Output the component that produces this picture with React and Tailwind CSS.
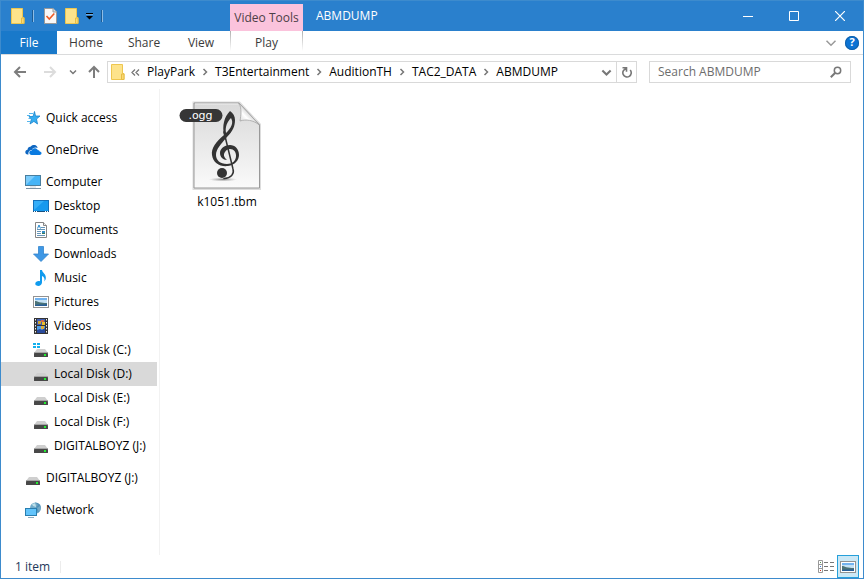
const Folder = ({ className = "" }) => (
  <svg width="14" height="16" viewBox="0 0 14 16" className={"shrink-0 " + className}>
    <path d="M.5.5h11v9h1.500v6H.5z" fill="#fde38b" stroke="#eec64f" />
    <path d="M10.500 10h2.500v5.500h-2.500z" fill="#fbd974" stroke="#e6bd45" />
  </svg>
);

const CheckDoc = () => (
  <svg width="13" height="16" viewBox="0 0 13 16">
    <path d="M.5.5h8.500l3.500 3.500v11.500h-12z" fill="#f8f8f8" stroke="#9a9a9a" />
    <path d="M9 .5v3.500h3.500" fill="#ddd" stroke="#9a9a9a" />
    <path d="M2.500 8l2.800 3 5-5.500" fill="none" stroke="#ee5a24" strokeWidth="1.600" />
  </svg>
);

const Separator = () => (
  <svg width="4" height="14" viewBox="0 0 4 14">
    <path d="M.5 1v12" stroke="#1b5c96" />
    <path d="M1.500 1v12" stroke="#8dbce5" />
  </svg>
);

const Chevron = ({ dir = "down", size = 8, color = "#777", weight = 2 }) => (
  <svg width={size} height={size} viewBox="0 0 8 8" fill="none" stroke={color} strokeWidth={weight}>
    <path d={dir === "down" ? "M1 2.500l3 3 3-3" : "M2.500 1l3 3-3 3"} />
  </svg>
);

const Arrow = ({ className = "", color = "#7d7d7d" }) => (
  <svg width="14" height="14" viewBox="0 0 14 14" className={className} fill="none" stroke={color} strokeWidth="2">
    <path d="M13 7H2M7 2L2 7l5 5" />
  </svg>
);

const Star = () => (
  <svg width="16" height="16" viewBox="0 0 16 16">
    <path d="M9.500 1.500l1 4.500h4.500l-3.500 3 1 5L8.900 11.400 5 14l1.300-4.500L4 6.500h4z" fill="#36adf0" stroke="#1b84cc" strokeWidth=".8" />
    <path d="M4 3.500h4M2 5.500h3M3.500 8.500h2M2 11.500h3" stroke="#55b7ee" />
  </svg>
);

const Cloud = () => (
  <svg width="17" height="16" viewBox="0 0 17 16">
    <path d="M3.500 12.500H2.800C1 12.500.3 11.300.3 10.100c0-1.300 1-2.300 2.200-2.400C2.700 5.700 4 4.600 5.500 4.800 6.500 3.300 8 2.700 9.600 3c1.600.3 2.700 1.400 3 2.900-1.500-.9-4.600-.7-5.800 2-2.200.1-3.900 1.900-3.300 4.600z" fill="#0f67c1" />
    <path d="M6.700 13c-1.500 0-2.400-1-2.400-2.200 0-1.300 1-2.200 2.400-2.200.5-1.600 1.900-2.500 3.400-2.300 1.300.1 2.300.9 2.800 2 1.100 0 1.600.5 1.800 1.300 1.100.1 1.800.8 1.800 1.700 0 1-.8 1.700-1.900 1.700z" fill="#0b7be0" />
  </svg>
);

const Monitor = () => (
  <svg width="17" height="16" viewBox="0 0 17 16">
    <rect x=".5" y="1.500" width="15" height="10" fill="#45b4f7" stroke="#497e9e" />
    <path d="M1 11L10 2H1z" fill="#7cccfb" />
    <path d="M5 13h6" stroke="#c9d3da" />
    <path d="M1 14.500h15" stroke="#7b92a4" />
  </svg>
);

const Desktop = () => (
  <svg width="16" height="16" viewBox="0 0 16 16">
    <rect x=".5" y="2.500" width="15" height="11" fill="#1799ee" stroke="#1470ba" />
    <path d="M1 12L11 3H1z" fill="#35aef8" />
    <path d="M0 13.500h16" stroke="#164f7e" />
    <path d="M1 13.500h1M3 13.500h1M12 13.500h1M14 13.500h1" stroke="#fff" />
  </svg>
);

const Documents = () => (
  <svg width="16" height="16" viewBox="0 0 16 16">
    <path d="M2.500.5h8l3 3v12h-11z" fill="#fff" stroke="#858585" />
    <path d="M10.500.5v3h3" fill="#eee" stroke="#858585" />
    <path d="M4.500 6.500L6 3l1.500 3.500" stroke="#2387ca" fill="none" />
    <path d="M8 5.500h4M4 7.500h8M4 9.500h4M4 11.500h4M4 13.500h8" stroke="#6695b8" />
    <path d="M9 9h3v3H9z" fill="#348cc5" />
    <path d="M9 11h3v1H9z" fill="#397a57" />
  </svg>
);

const Downloads = () => (
  <svg width="16" height="16" viewBox="0 0 16 16">
    <path d="M5.500.5h5v7.500h5L8 15.500.5 8h5z" fill="#3f98e5" stroke="#3284cd" strokeWidth=".8" />
  </svg>
);

const Music = () => (
  <svg width="16" height="16" viewBox="0 0 16 16">
    <path d="M7 0h2c.3 3 4.500 4 3.800 8.500-.2 1.300-.8 2-1.500 3 .8-3-.3-4.500-2.300-5.500v6.500C8.800 15 7 16 5 15.900c-1.800 0-2.900-1-2.700-2.300.2-1.800 2.400-3 4.700-2.300z" fill="#109bee" />
  </svg>
);

const Picture = () => (
  <svg width="16" height="16" viewBox="0 0 16 16">
    <rect x=".5" y="2.500" width="15" height="11" fill="#fff" stroke="#929292" />
    <path d="M2 4h12v8H2z" fill="#72b3f0" />
    <path d="M2 6h12v3H2z" fill="#c5e1f4" />
    <path d="M2 7c2-.5 3 1 6 1.500S12 9 14 9v3H2z" fill="#4c7377" />
    <path d="M2 11c4-1 8 0 12-1v2H2z" fill="#285f98" />
  </svg>
);

const Video = () => (
  <svg width="16" height="16" viewBox="0 0 16 16">
    <path d="M1 0h14v16H1z" fill="#343434" />
    <path d="M4 1h8v6H4z" fill="#425eb0" />
    <path d="M4 8h8v7H4z" fill="#4e9ee9" />
    <path d="M5 3h3v3H5z" fill="#cda334" />
    <path d="M8 2h3v2H8z" fill="#d46a47" />
    <path d="M9 4h3v3H9z" fill="#eabf2e" />
    <path d="M4 12l3-1 2 1 3-2v5H4z" fill="#294a9b" />
    <path d="M8 8h3v3H8z" fill="#dfad3c" />
    <path d="M2.500 1v14M13.500 1v14" stroke="#eee" strokeDasharray="1.500 1.500" />
  </svg>
);

const Disk = ({ win }) => (
  <svg width="16" height="16" viewBox="0 0 16 16">
    <path d="M4 7h8l3 4H1z" fill="#cfcfcf" />
    <rect x="1" y="11" width="14" height="4" rx=".5" fill="#484848" />
    <path d="M1 10.500h14" stroke="#a5a5a5" />
    <path d="M11 12h2v2h-2z" fill="#21ef31" />
    {win && <path d="M0 1h3v2H0zM4 1h3v2H4zM0 4h3v2H0zM4 4h3v2H4z" fill="#13b0ed" />}
  </svg>
);

const Network = () => (
  <svg width="17" height="17" viewBox="0 0 17 17">
    <circle cx="10.500" cy="6" r="5.500" fill="#72acca" />
    <path d="M7 2l4-1 2 2-2 2-3-1zM12 6l3-2 1 3-2 3z" fill="#bddfe9" />
    <path d="M10 .5a5.500 5.500 0 015.800 6.500 6 6 0 01-3 4z" fill="#347aa7" opacity=".55" />
    <rect x=".5" y="6.500" width="11" height="7" fill="#62c4fb" stroke="#297eaf" />
    <path d="M3 15.500h6" stroke="#8eacc0" />
  </svg>
);

const OggFile = () => (
  <svg width="96" height="96" viewBox="0 0 96 96" role="img" aria-label="ogg audio file">
    <defs>
      <linearGradient id="paper" x1="0" y1="0" x2="0" y2="1">
        <stop offset="0" stopColor="#d9d9d9" />
        <stop offset="1" stopColor="#fafafa" />
      </linearGradient>
      <linearGradient id="fold" x1="0" y1="1" x2="1" y2="0">
        <stop offset="0" stopColor="#c8c8c8" />
        <stop offset=".35" stopColor="#fff" />
        <stop offset=".6" stopColor="#c4c4c4" />
      </linearGradient>
      <radialGradient id="shade">
        <stop offset="0" stopColor="#555" stopOpacity=".7" />
        <stop offset="1" stopColor="#888" stopOpacity="0" />
      </radialGradient>
    </defs>
    <path d="M14.500 4.500h46l20.500 22v64.500H14.500z" fill="none" opacity=".4" stroke="#aaa" strokeWidth="2" />
    <path d="M15 5h45l20.500 22v63H15z" fill="url(#paper)" stroke="#999" />
    <path d="M16 6h43" stroke="#eee" />
    <path d="M60 5c3 6 2 12 1 18 6-2 13-1 19.500 4z" fill="url(#fold)" stroke="#a3a3a3" strokeWidth=".8" />
    <ellipse cx="44" cy="81.500" rx="14" ry="2" fill="url(#shade)" />
    <path d="M45 34l9 37c1.500 5-2 9-9 9.500" fill="none" stroke="#333" strokeWidth="1.500" strokeLinecap="round" />
    <circle cx="43" cy="75" r="5" fill="#333" />
    <path
      fillRule="evenodd"
      d="M51 13C45 19 43 28 45 37 37 44 32 50 33 57c1 8 8 12 16 11 7-1 11-6 11-11 0-6-4-10-9-10-6 0-10 4-10 8 0 4 3 7 7 7-3-3-4-5-2-8 1-2 3-3 5-3 4 0 6 3 6 7 0 5-4 8-9 8-7 0-11-4-11-9 0-6 5-11 11-18 6-6 8-11 8-17 0-4-2-7-5-9zm1 7c3 5 0 10-5 15-1-6 1-11 5-15z"
      fill="#333"
    />
    <rect x=".5" y="11" width="43" height="13" rx="6.500" fill="#363636" />
    <text x="21.500" y="21" textAnchor="middle" fill="#fff" fontFamily="DejaVu Sans, sans-serif" fontSize="11">.ogg</text>
  </svg>
);

const treeItems = [
  { label: "Quick access", icon: <Star />, root: true },
  { label: "OneDrive", icon: <Cloud />, root: true },
  { label: "Computer", icon: <Monitor />, root: true },
  { label: "Desktop", icon: <Desktop /> },
  { label: "Documents", icon: <Documents /> },
  { label: "Downloads", icon: <Downloads /> },
  { label: "Music", icon: <Music /> },
  { label: "Pictures", icon: <Picture /> },
  { label: "Videos", icon: <Video /> },
  { label: "Local Disk (C:)", icon: <Disk win /> },
  { label: "Local Disk (D:)", icon: <Disk />, selected: true },
  { label: "Local Disk (E:)", icon: <Disk /> },
  { label: "Local Disk (F:)", icon: <Disk /> },
  { label: "DIGITALBOYZ (J:)", icon: <Disk /> },
  { label: "DIGITALBOYZ (J:)", icon: <Disk />, root: true },
  { label: "Network", icon: <Network />, root: true },
];

const crumbs = ["PlayPark", "T3Entertainment", "AuditionTH", "TAC2_DATA", "ABMDUMP"];

const TitleBar = () => (
  <header className="flex h-[30px] bg-[#2a80cd]">
    <div className="flex w-[229px] shrink-0 items-center pl-[10px]">
      <button aria-label="Folder"><Folder /></button>
      <div className="ml-[7px]"><Separator /></div>
      <button aria-label="Properties" className="ml-2"><CheckDoc /></button>
      <button aria-label="New folder" className="ml-2"><Folder /></button>
      <button aria-label="Customize toolbar" className="ml-[7px]">
        <svg width="7" height="8" viewBox="0 0 7 8">
          <path d="M0 1.500h7" stroke="#000" />
          <path d="M0 2.500h7" stroke="#9fc8ec" opacity=".6" />
          <path d="M0 4h7L3.500 7.500z" fill="#000" />
        </svg>
      </button>
      <div className="ml-2"><Separator /></div>
    </div>
    <div className="mt-[3px] flex w-[73px] shrink-0 items-center justify-center bg-[#fbc3dc] text-[#4c4046]">
      Video Tools
    </div>
    <h1 className="ml-[13px] flex-1 self-center text-white">ABMDUMP</h1>
    <div className="flex text-white">
      <button aria-label="Minimize" className="flex w-[46px] items-center justify-center">
        <svg width="10" height="10" viewBox="0 0 10 10" stroke="#fff"><path d="M0 5.500h10" /></svg>
      </button>
      <button aria-label="Maximize" className="flex w-[46px] items-center justify-center">
        <svg width="10" height="10" viewBox="0 0 10 10" stroke="#fff" fill="none"><path d="M.5.5h9v9h-9z" /></svg>
      </button>
      <button aria-label="Close" className="flex w-[46px] items-center justify-center">
        <svg width="10" height="10" viewBox="0 0 10 10" stroke="#fff" strokeWidth="1.200"><path d="M0 0l10 10M10 0L0 10" /></svg>
      </button>
    </div>
  </header>
);

const Ribbon = () => (
  <nav className="flex h-6 border-b border-[#dadbdc] text-[#3b3b3b]">
    <div className="flex w-[229px] shrink-0">
      <button className="w-14 bg-[#1979ca] text-white">File</button>
      <button className="w-[58px]">Home</button>
      <button className="w-[58px]">Share</button>
      <button className="w-14">View</button>
    </div>
    <div className="flex w-[73px] shrink-0 justify-between">
      <div className="h-5 w-px bg-linear-to-b from-[#b0b0b0] to-white" />
      <button className="flex-1">Play</button>
      <div className="h-5 w-px bg-linear-to-b from-[#b0b0b0] to-white" />
    </div>
    <div className="flex flex-1 items-center justify-end gap-2 pr-1">
      <button aria-label="Minimize the ribbon">
        <Chevron size={12} color="#999" weight={1} />
      </button>
      <button aria-label="Help" className="flex size-[14px] items-center justify-center rounded-full bg-[#0c73d4] text-[11px] font-bold text-white ring-1 ring-[#1261aa] ring-inset">
        ?
      </button>
    </div>
  </nav>
);

const AddressBar = () => (
  <div className="flex h-[34px] items-center pr-3">
    <div className="flex w-[106px] shrink-0 items-center pl-3">
      <button aria-label="Back"><Arrow /></button>
      <button aria-label="Forward" className="ml-4"><Arrow className="rotate-180" color="#dcdcdc" /></button>
      <button aria-label="Recent locations" className="ml-3"><Chevron weight={1.500} /></button>
      <button aria-label="Up" className="ml-2.5"><Arrow className="rotate-90" /></button>
    </div>
    <div className="flex h-[22px] flex-1 items-center border border-[#d9d9d9]">
      <Folder className="ml-[3px]" />
      <svg width="9" height="8" viewBox="0 0 9 8" className="mr-[7px] ml-[6px]" fill="none" stroke="#777" strokeWidth="1.300">
        <path d="M4 1.500L1 4.500l3 3M8 1.500L5 4.500l3 3" />
      </svg>
      <ol className="flex flex-1 items-center text-black">
        {crumbs.map((name, i) => (
          <li key={name} className="flex items-center">
            {i > 0 && (
              <span className="flex w-5 justify-center">
                <Chevron dir="right" weight={1.500} />
              </span>
            )}
            <a href="#">{name}</a>
          </li>
        ))}
      </ol>
      <button aria-label="Previous locations" className="flex w-5 justify-center"><Chevron size={11} weight={1.500} /></button>
      <button aria-label="Refresh" className="flex h-full w-5 items-center justify-center border-l border-[#d9d9d9]">
        <svg width="12" height="12" viewBox="0 0 12 12" fill="none" stroke="#777" strokeWidth="1.600">
          <path d="M9.200 4A4.200 4.200 0 115 2.700M1.500 1.800h4v4" />
        </svg>
      </button>
    </div>
    <label className="ml-3 flex h-[22px] w-[202px] items-center border border-[#d9d9d9] pr-2 pl-2">
      <input aria-label="Search ABMDUMP" placeholder="Search ABMDUMP" className="min-w-0 flex-1 outline-none placeholder:text-[#6d6d6d]" />
      <svg width="12" height="12" viewBox="0 0 12 12" fill="none" stroke="#777">
        <circle cx="7.500" cy="4.500" r="3.200" strokeWidth="1.500" />
        <path d="M5 7L.8 11.200" strokeWidth="2" />
      </svg>
    </label>
  </div>
);

const Sidebar = () => (
  <ul className="w-[159px] shrink-0 border-r border-[#f2f2f2] pt-[9px] pr-0.5 text-black">
    {treeItems.map((item, i) => (
      <li key={i} className={item.root ? "pt-2" : ""}>
        <button
          className={
            "flex h-6 w-full items-center gap-[5px] whitespace-nowrap " +
            (item.root ? "pl-6 " : "pl-8 ") +
            (item.selected ? "bg-[#d9d9d9]" : "")
          }
        >
          <span className="w-4 shrink-0">{item.icon}</span>
          {item.label}
        </button>
      </li>
    ))}
  </ul>
);

const StatusBar = () => (
  <footer className="flex h-[23px] items-center pr-1 text-[#1e395b]">
    <div className="border-r border-[#ececec] pr-2.5 pl-3.5 leading-3">1 item</div>
    <div className="flex flex-1 items-center justify-end gap-[3px]">
      <button aria-label="Details view">
        <svg width="16" height="13" viewBox="0 0 16 13">
          <path d="M.5.5h4v12h-4zM.5 4.500h4M.5 8.500h4" fill="#fff" stroke="#999" />
          <path d="M2 2h1v1H2z" fill="#548f50" />
          <path d="M2 6h1v1H2z" fill="#3881dd" />
          <path d="M2 10h1v1H2z" fill="#d3301e" />
          <path d="M6 2.500h4M12 2.500h4M6 6.500h4M12 6.500h4M6 10.500h4M12 10.500h4" stroke="#777" />
        </svg>
      </button>
      <button aria-label="Large icons view" className="flex h-[23px] w-[22px] items-center justify-center border border-[#26a0da] bg-[#cbe8f6]">
        <Picture />
      </button>
    </div>
  </footer>
);

const App = () => {
  return (
    <div className="flex min-h-screen flex-col border border-[#3d8bcd] bg-white font-['Open_Sans','Noto_Sans',sans-serif] text-xs">
      <TitleBar />
      <Ribbon />
      <AddressBar />
      <div className="flex flex-1">
        <Sidebar />
        <main className="flex-1 px-[19px] pt-[9px]">
          <button className="flex w-24 flex-col items-center text-black">
            <OggFile />
            k1051.tbm
          </button>
        </main>
      </div>
      <StatusBar />
    </div>
  );
};

export default App;
